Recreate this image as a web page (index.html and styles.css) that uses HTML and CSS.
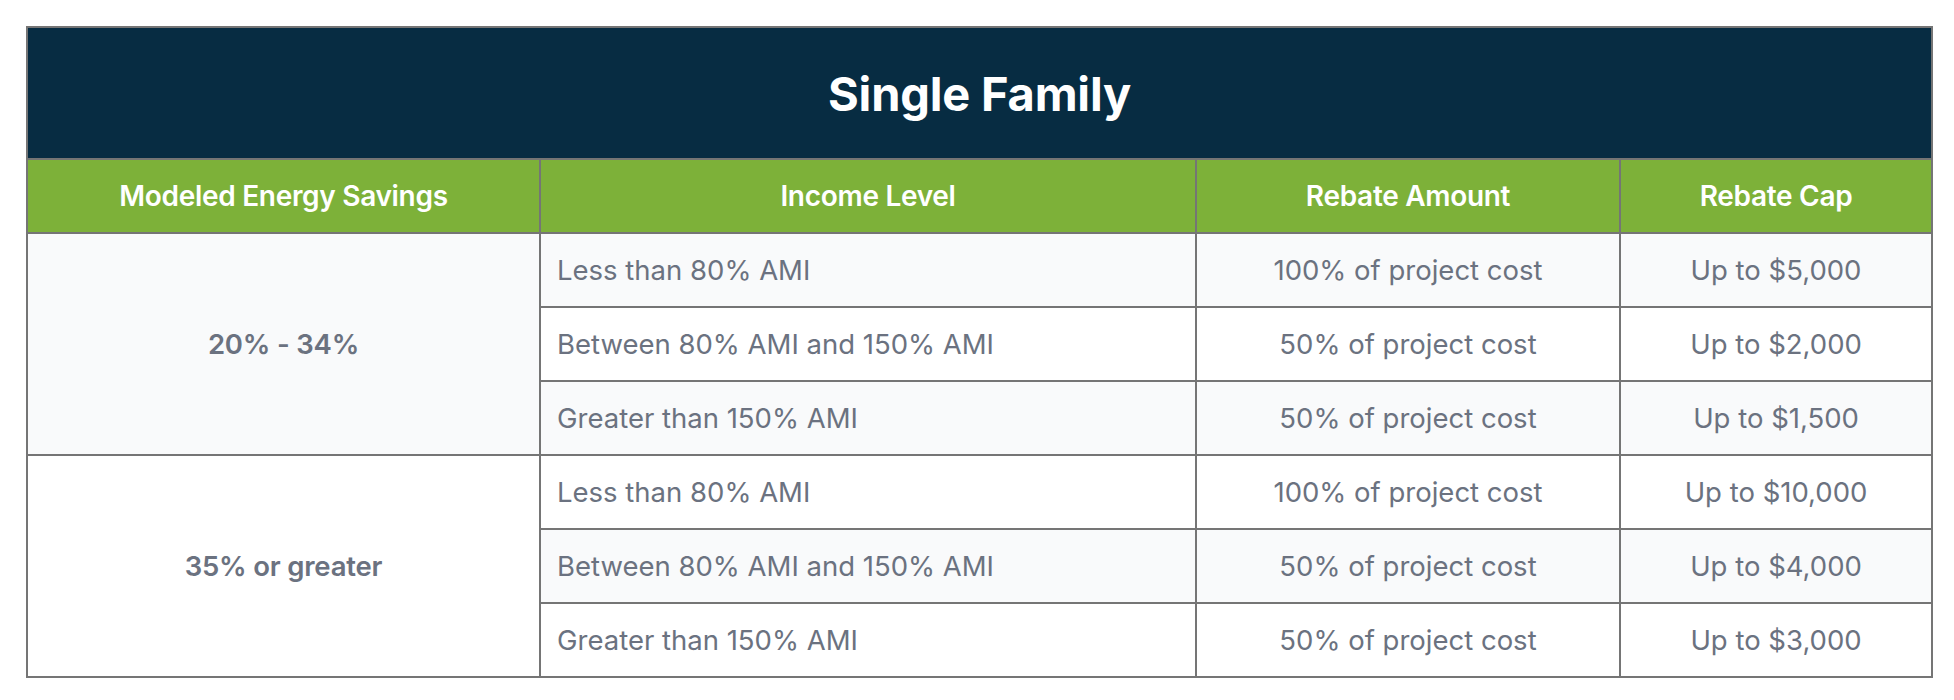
FILE: index.html
```html
<!DOCTYPE html>
<html lang="en">
<head>
<meta charset="utf-8">
<title>Single Family</title>
<link rel="stylesheet" href="styles.css">
</head>
<body>
<table class="rebates">
  <colgroup>
    <col class="c1">
    <col class="c2">
    <col class="c3">
    <col class="c4">
  </colgroup>
  <thead>
    <tr class="title-row"><th colspan="4" class="title">Single Family</th></tr>
    <tr class="head-row">
      <th>Modeled Energy Savings</th>
      <th>Income Level</th>
      <th>Rebate Amount</th>
      <th>Rebate Cap</th>
    </tr>
  </thead>
  <tbody>
    <tr class="alt">
      <td rowspan="3" class="group alt">20% - 34%</td>
      <td class="income">Less than 80% AMI</td>
      <td class="center">100% of project cost</td>
      <td class="center">Up to $5,000</td>
    </tr>
    <tr>
      <td class="income">Between 80% AMI and 150% AMI</td>
      <td class="center">50% of project cost</td>
      <td class="center">Up to $2,000</td>
    </tr>
    <tr class="alt">
      <td class="income">Greater than 150% AMI</td>
      <td class="center">50% of project cost</td>
      <td class="center">Up to $1,500</td>
    </tr>
    <tr>
      <td rowspan="3" class="group">35% or greater</td>
      <td class="income">Less than 80% AMI</td>
      <td class="center">100% of project cost</td>
      <td class="center">Up to $10,000</td>
    </tr>
    <tr class="alt">
      <td class="income">Between 80% AMI and 150% AMI</td>
      <td class="center">50% of project cost</td>
      <td class="center">Up to $4,000</td>
    </tr>
    <tr>
      <td class="income">Greater than 150% AMI</td>
      <td class="center">50% of project cost</td>
      <td class="center">Up to $3,000</td>
    </tr>
  </tbody>
</table>
</body>
</html>
```
FILE: styles.css
```css
html, body {
  margin: 0;
  padding: 0;
  background: #ffffff;
}
body {
  padding: 26px 0 0 26px;
  font-family: Inter, "Noto Sans", sans-serif;
}
.rebates {
  border-collapse: collapse;
  table-layout: fixed;
  width: 1905px;
  border: 2px solid #757575;
}
.c1 { width: 513px; }
.c2 { width: 656px; }
.c3 { width: 424px; }
.c4 { width: 312px; }
.rebates th,
.rebates td {
  border: 2px solid #757575;
  padding: 0 16px;
  vertical-align: middle;
}
.title-row { height: 132px; }
.title {
  background: #072c42;
  color: #ffffff;
  font-size: 47px;
  font-weight: 700;
  letter-spacing: -0.2px;
  text-align: center;
  padding-bottom: 6px;
}
.head-row { height: 74px; }
.head-row th {
  background: #7db139;
  color: #ffffff;
  font-size: 28px;
  font-weight: 600;
  letter-spacing: -0.3px;
  text-align: center;
}
tbody tr { height: 74px; }
tbody td {
  color: #6b7280;
  font-size: 27.5px;
  font-weight: 400;
  background: #ffffff;
}
tbody tr.alt td,
tbody td.group.alt { background: #f9fafb; }
tbody td.group {
  font-weight: 600;
  letter-spacing: -0.2px;
  text-align: center;
  background: #ffffff;
}
.income { text-align: left; }
.center { text-align: center; }
```
